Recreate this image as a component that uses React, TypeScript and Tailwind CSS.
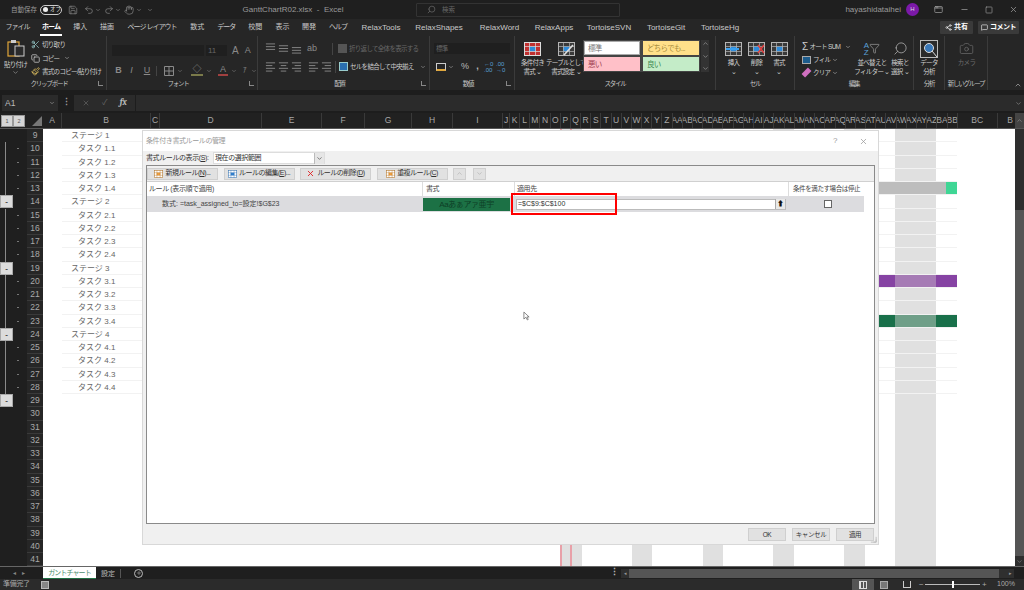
import { ChevronDown, ChevronUp, Copy, Filter, Minus, Paintbrush, Redo2, Save, Scissors, Search, Square, Undo2, X, Share2, MessageSquare, Plus, Camera, Hand, AppWindow } from 'lucide-react';
import type { ReactNode } from 'react';

const FONT = 'font-["Liberation_Sans","Noto_Sans_CJK_JP",sans-serif]';

const KANA = 'text-[7px] tracking-[-1px]';
const KANJI = 'text-[7px]';
const LATIN = 'text-[8px]';
const tabs: [string, string, string][] = [
  ['ファイル', 'w-[35px]', KANA], ['ホーム', 'w-[32px]', KANA], ['挿入', 'w-[26.5px]', KANJI], ['描画', 'w-[27px]', KANJI], ['ページ レイアウト', 'w-[63px]', KANA],
  ['数式', 'w-[27.5px]', KANJI], ['データ', 'w-[30.5px]', KANA], ['校閲', 'w-[27.5px]', KANJI], ['表示', 'w-[27px]', KANJI], ['開発', 'w-[26px]', KANJI], ['ヘルプ', 'w-[32px]', KANA],
  ['RelaxTools', 'w-[54px]', LATIN], ['RelaxShapes', 'w-[62px]', LATIN], ['RelaxWord', 'w-[59px]', LATIN], ['RelaxApps', 'w-[50px]', LATIN],
  ['TortoiseSVN', 'w-[60px]', LATIN], ['TortoiseGit', 'w-[54px]', LATIN], ['TortoiseHg', 'w-[54px]', LATIN],
];

const letters = 'KLMNOPQRSTUVWXYZ'.split('');
const wide = 'ABCDEFGHIJKLMNOPQRSTUVWXYZ'.split('').map(c => 'A' + c).concat(['BA', 'BB']);
const cols: [string, number][] = [
  ['A', 19], ['B', 89], ['C', 9], ['D', 102], ['E', 60], ['F', 43], ['G', 47], ['H', 41], ['I', 50], ['J', 7],
  ...letters.map(l => [l, 10.17] as [string, number]),
  ...wide.map(l => [l, 10.2] as [string, number]),
  ['BC', 40],
];

const labels: Record<number, string> = {
  9: 'ステージ 1', 10: 'タスク 1.1', 11: 'タスク 1.2', 12: 'タスク 1.3', 13: 'タスク 1.4',
  14: 'ステージ 2', 15: 'タスク 2.1', 16: 'タスク 2.2', 17: 'タスク 2.3', 18: 'タスク 2.4',
  19: 'ステージ 3', 20: 'タスク 3.1', 21: 'タスク 3.2', 22: 'タスク 3.3', 23: 'タスク 3.4',
  24: 'ステージ 4', 25: 'タスク 4.1', 26: 'タスク 4.2', 27: 'タスク 4.3', 28: 'タスク 4.4',
};
const rows = Array.from({ length: 33 }, (_, i) => i + 9);
const headRows = [9, 14, 19, 24];

// timeline from x=510 to x=957
type Seg = [number, string];
const W = '#ffffff', G = '#e0e0e0', P = '#e8a0a8';
const baseSegs: Seg[] = [[50, W], [2, P], [8, G], [2, P], [10, G], [50, W], [20, G], [51, W], [20, G], [50, W], [21, G], [50, W], [21, G], [30, W], [41, G], [21, W]];
const leftPart: Seg[] = baseSegs.slice(0, 13);
function segs(r: number): Seg[] {
  if (r === 13) return [...leftPart, [81, '#bdbdbd'], [11, '#3fd695']];
  if (r === 20) return [...leftPart, [30, '#8643a3'], [41, '#a67bb5'], [21, '#8643a3']];
  if (r === 23) return [...leftPart, [30, '#19704a'], [41, '#6f9f88'], [21, '#19704a']];
  return baseSegs;
}

function GridIcon({ fill = '#3a3a3a', hi = '#2e8ad8', line = '#b5b5b5', className = 'w-[17px] h-[14px]', extra }: { fill?: string; hi?: string; line?: string; className?: string; extra?: ReactNode }) {
  return (
    <svg viewBox="0 0 17 14" className={className}>
      <rect x="0.5" y="0.5" width="16" height="13" fill={fill} stroke={line} />
      <rect x="5" y="4.5" width="7" height="5" fill={hi} />
      <path d="M0 4.5H17M0 9.5H17M5.5 0V14M11.5 0V14" stroke={line} strokeWidth="0.7" />
      {extra}
    </svg>
  );
}

function AlignIcon({ kind }: { kind: 'l' | 'c' | 'r' | 't' | 'm' | 'b' }) {
  const d = {
    l: 'M1 2H11M1 5H8M1 8H11M1 11H8', c: 'M1 2H11M3 5H9M1 8H11M3 11H9', r: 'M1 2H11M4 5H11M1 8H11M4 11H11',
    t: 'M1 1H11M1 4H11M1 7H11', m: 'M1 3H11M1 6H11M1 9H11', b: 'M1 5H11M1 8H11M1 11H11',
  }[kind];
  return <svg viewBox="0 0 12 12" className="w-[11px] h-[11px] shrink-0"><path d={d} stroke="#8a8a8a" strokeWidth="1" fill="none" /></svg>;
}

function Group({ w, label, launcher, children }: { w: string; label: string; launcher?: boolean; children: ReactNode }) {
  return (
    <div className={`${w} h-full flex flex-col border-r border-[#3b3b3b] shrink-0`}>
      <div className="flex-1 min-h-0 flex">{children}</div>
      <div className={`h-[12px] flex items-center justify-center relative text-[6.5px] tracking-[-1.2px] text-[#c4c4c4] leading-none whitespace-nowrap ${launcher ? 'pr-[8px]' : ''}`}>
        {label}
        {launcher && <span className="absolute right-[3px] top-[3px] w-[5px] h-[5px] border-l border-b border-[#888]" />}
      </div>
    </div>
  );
}

function Big({ w, icon, lines, dim }: { w: string; icon: ReactNode; lines: string[]; dim?: boolean }) {
  return (
    <div className={`${w} flex flex-col items-center pt-[5px] shrink-0`}>
      <div className="h-[15px] flex items-center justify-center">{icon}</div>
      <div className={`mt-[3px] text-[6.5px] leading-[8.5px] text-center whitespace-nowrap ${dim ? 'text-[#6b6b6b]' : 'text-[#cfcfcf]'}`}>
        {lines.map(l => <div key={l}>{l}</div>)}
      </div>
    </div>
  );
}

function Style({ t, cls }: { t: string; cls: string }) {
  return <div className={`w-[56px] h-[14px] px-[3px] text-[7.5px] leading-[13px] whitespace-nowrap overflow-hidden border ${cls}`}>{t}</div>;
}

function DlgBtn({ icon, t, u, end }: { icon: ReactNode; t: string; u: string; end: string }) {
  return (
    <div className="w-[71px] h-[12px] bg-[#e1e1e1] border border-[#cfcfcf] flex items-center justify-center gap-[2px] text-[7px] tracking-[-0.5px] text-[#333] whitespace-nowrap">
      {icon}<span>{t}(<span className="underline">{u}</span>){end}</span>
    </div>
  );
}

function Titlebar() {
  return (
    <div className="h-[19px] bg-[#1f1f1f] flex items-center text-[#9a9a9a] text-[8px]">
      <div className="w-[170px] shrink-0 flex items-center pl-[11px]">
        <span className="w-[29px] whitespace-nowrap text-[6.5px]">自動保存</span>
        <div className="w-[22px] h-[10px] rounded-full border border-[#ccc] flex items-center text-[5.5px] text-[#ddd] whitespace-nowrap">
          <span className="w-[5px] h-[5px] rounded-full bg-[#eee] ml-[2px] mr-[2px] shrink-0" />オフ
        </div>
        <Save size={10} className="ml-[6px]" strokeWidth={1.4} />
        <Undo2 size={10} className="ml-[6px]" strokeWidth={1.4} />
        <ChevronDown size={6} className="ml-[1px]" />
        <Redo2 size={10} className="ml-[3px]" strokeWidth={1.4} />
        <ChevronDown size={6} className="ml-[1px]" />
        <Hand size={10} className="ml-[3px]" strokeWidth={1.4} />
        <ChevronDown size={6} className="ml-[2px]" />
        <ChevronDown size={6} className="ml-[5px]" />
      </div>
      <span className="w-[246px] shrink-0 text-center text-[8px] whitespace-nowrap">GanttChartR02.xlsx&nbsp; -&nbsp; Excel</span>
      <div className="w-[204px] h-[14px] shrink-0 border border-[#333] rounded-[1px] flex items-center pl-[10px] gap-[6px] text-[#666] text-[6.5px]">
        <Search size={9} className="scale-x-[-1]" />検索
      </div>
      <div className="flex-1 flex items-center justify-end">
        <span className="whitespace-nowrap text-[8px]">hayashidataihei</span>
        <span className="w-[13px] h-[13px] rounded-full bg-[#7b19a8] text-[6px] flex items-center justify-center text-[#ddd] ml-[5px]">H</span>
        <AppWindow size={9} className="ml-[15px]" />
        <Minus size={9} className="ml-[17px]" />
        <Square size={8} className="ml-[16px]" />
        <X size={9} className="ml-[16px] mr-[6px]" />
      </div>
    </div>
  );
}

function TabRow() {
  return (
    <div className="h-[17px] bg-[#262626] flex items-center text-[#c8c8c8] whitespace-nowrap">
      {tabs.map(([t, w, f]) => (
        <div key={t} className={`${w} ${f} shrink-0 text-center relative ${t === 'ホーム' ? 'text-white font-bold' : ''}`}>
          {t}
          {t === 'ホーム' && <span className="absolute left-[5px] right-[5px] -bottom-[3px] h-[1.5px] bg-white" />}
        </div>
      ))}
      <div className="ml-[193px] w-[33px] h-[13px] bg-[#3a3a3a] rounded-[1px] flex items-center justify-center gap-[2px] text-white font-bold text-[7px]">
        <Share2 size={7} />共有
      </div>
      <div className="ml-[5px] w-[41px] h-[13px] bg-[#3a3a3a] rounded-[1px] flex items-center justify-center gap-[2px] text-white font-bold text-[7px] tracking-[-0.5px]">
        <MessageSquare size={7} />コメント
      </div>
    </div>
  );
}

function Ribbon() {
  return (
    <div className="h-[54px] bg-[#262626] flex text-[#b5b5b5] text-[6.5px] tracking-[-0.7px]">
      <Group w="w-[107px]" label="クリップボード" launcher>
        <div className="w-[31px] flex flex-col items-center pt-[3px]">
          <svg viewBox="0 0 18 18" className="w-[18px] h-[18px]">
            <rect x="1" y="3" width="11" height="14" fill="none" stroke="#e0a63a" strokeWidth="1.2" />
            <rect x="4" y="1" width="5" height="3" fill="#ccc" />
            <rect x="8" y="7" width="9" height="10" fill="#2b2b2b" stroke="#ccc" />
          </svg>
          <div className="leading-[9px] mt-[3px] text-[#ccc] whitespace-nowrap">貼り付け</div>
          <ChevronDown size={7} className="text-[#aaa]" />
        </div>
        <div className="flex-1 flex flex-col pt-[2px] text-[#ccc] whitespace-nowrap leading-[13.5px]">
          <div className="flex items-center gap-[2px]"><Scissors size={9} className="text-[#9cc]" />切り取り</div>
          <div className="flex items-center gap-[2px]"><Copy size={9} />コピー<ChevronDown size={6} className="ml-[3px]" /></div>
          <div className="flex items-center gap-[2px]"><Paintbrush size={9} className="text-[#e0c060]" />書式のコピー/貼り付け</div>
        </div>
      </Group>
      <Group w="w-[151px]" label="フォント" launcher>
        <div className="pl-[5px] pt-[7px] flex flex-col gap-[7px]">
          <div className="flex items-center gap-[2px] text-[#666] text-[8px] tracking-normal">
            <div className="w-[92px] h-[11px] bg-[#1f1f1f]" />
            <div className="w-[21px] h-[11px] bg-[#1f1f1f] pl-[2px] leading-[11px]">11</div>
            <span className="ml-[3px] text-[10px] text-[#8a8a8a]">A</span>
            <span className="ml-[4px] text-[9px] text-[#8a8a8a]">A</span>
          </div>
          <div className="flex items-center text-[9px] text-[#8a8a8a] h-[11px] tracking-normal">
            <b className="w-[13px] text-center">B</b><i className="w-[13px] text-center">I</i><span className="w-[18px] text-center underline">U</span>
            <span className="w-[1px] h-[10px] bg-[#444] mr-[7px]" />
            <svg viewBox="0 0 10 10" className="w-[10px] h-[10px]"><path d="M.5.5H9.5V9.5H.5ZM5 0V10M0 5H10" stroke="#8a8a8a" fill="none" /></svg>
            <ChevronDown size={6} className="ml-[3px] mr-[8px]" />
            <span className="w-[12px] text-center border-b-2 border-[#7a7a4a] leading-[9px]">◇</span>
            <ChevronDown size={6} className="ml-[3px] mr-[6px]" />
            <span className="w-[10px] text-center border-b-2 border-[#a04040] leading-[9px]">A</span>
            <ChevronDown size={6} className="ml-[3px] mr-[6px]" />
            <span className="text-[7px]">ｱ</span>
            <ChevronDown size={6} className="ml-[4px]" />
          </div>
        </div>
      </Group>
      <Group w="w-[172px]" label="配置" launcher>
        <div className="pl-[7px] pt-[7px] flex flex-col gap-[7px]">
          <div className="flex items-center gap-[2px] h-[11px]">
            <AlignIcon kind="t" /><AlignIcon kind="m" /><AlignIcon kind="b" />
            <span className="w-[25px] pl-[3px] text-[9px] tracking-normal text-[#8a8a8a]">ab</span>
            <span className="w-[1px] h-[12px] bg-[#444] ml-[1px] shrink-0" />
            <span className="ml-[3px] w-[9px] h-[9px] bg-[#555] shrink-0" />
            <span className="text-[#666] whitespace-nowrap">折り返して全体を表示する</span>
          </div>
          <div className="flex items-center gap-[2px] h-[11px]">
            <AlignIcon kind="l" /><AlignIcon kind="c" /><AlignIcon kind="r" />
            <span className="w-[2px]" />
            <AlignIcon kind="l" /><AlignIcon kind="r" />
            <span className="w-[1px] h-[12px] bg-[#444] ml-[1px] shrink-0" />
            <span className="w-[9px] h-[9px] bg-[#2a6fb0] border border-[#9cc] shrink-0 ml-[1px]" />
            <span className="text-[#ccc] whitespace-nowrap">セルを結合して中央揃え</span>
            <ChevronDown size={6} className="ml-[4px]" />
          </div>
        </div>
      </Group>
      <Group w="w-[85px]" label="数値" launcher>
        <div className="pl-[4px] pt-[7px] flex flex-col gap-[7px]">
          <div className="w-[76px] h-[11px] bg-[#1f1f1f] text-[#666] pl-[2px] leading-[11px]">標準</div>
          <div className="flex items-center h-[11px] text-[#bbb] text-[9px] tracking-normal">
            <span className="w-[10px] h-[8px] ml-[2px] border border-[#ccc] border-b-[#e0a63a] border-b-2" />
            <ChevronDown size={6} className="ml-[2px] mr-[5px]" />
            <span className="w-[12px] text-center">%</span>
            <b className="w-[13px] text-center">,</b>
            <span className="text-[6px] leading-[6px] text-[#5aa0d8] w-[12px] whitespace-nowrap">←0<br />.00</span>
            <span className="text-[6px] leading-[6px] text-[#5aa0d8] whitespace-nowrap">.00<br />→0</span>
          </div>
        </div>
      </Group>
      <Group w="w-[201px]" label="スタイル">
        <Big w="w-[35px]" icon={<GridIcon fill="#c03030" hi="#2e8ad8" line="#ddd" />} lines={['条件付き', '書式 ⌄']} />
        <Big w="w-[32px]" icon={<GridIcon fill="#3a3a3a" hi="#2e8ad8" extra={<path d="M6 13L15 3" stroke="#ddd" strokeWidth="1.6" />} />} lines={['テーブルとして', '書式設定 ⌄']} />
        <div className="ml-[1px] mt-[4px] bg-[#444] p-[1px] grid grid-cols-[56px_56px] gap-x-[3px] gap-y-[2px] h-[32px] self-start shrink-0">
          <Style t="標準" cls="bg-white border-[#aaa] text-[#777]" />
          <Style t="どちらでも..." cls="bg-[#ffe08a] border-[#ffe08a] text-[#a58a3a]" />
          <Style t="悪い" cls="bg-[#ffc0c8] border-[#ffc0c8] text-[#a04050]" />
          <Style t="良い" cls="bg-[#c4ecc8] border-[#c4ecc8] text-[#3c8a50]" />
        </div>
        <div className="mt-[4px] ml-[1px] w-[8px] h-[32px] flex flex-col items-center justify-between bg-[#333] text-[#aaa] shrink-0">
          <ChevronUp size={7} /><ChevronDown size={7} /><ChevronDown size={7} />
        </div>
      </Group>
      <Group w="w-[79px]" label="セル">
        <div className="flex pl-[6px]">
          <Big w="w-[23px]" icon={<GridIcon extra={<path d="M1 7H14" stroke="#3aa0f0" strokeWidth="2" />} />} lines={['挿入', '⌄']} />
          <Big w="w-[23px]" icon={<GridIcon extra={<path d="M10 3L16 11M16 3L10 11" stroke="#e04040" strokeWidth="1.4" />} />} lines={['削除', '⌄']} />
          <Big w="w-[22px]" icon={<GridIcon />} lines={['書式', '⌄']} />
        </div>
      </Group>
      <Group w="w-[119px]" label="編集">
        <div className="w-[62px] pl-[7px] pt-[4px] text-[#ccc] leading-[13px] whitespace-nowrap shrink-0">
          <div className="flex items-center gap-[2px]"><span className="text-[10px]">Σ</span>オート SUM<ChevronDown size={6} className="ml-[3px]" /></div>
          <div className="flex items-center gap-[2px]"><span className="w-[9px] h-[8px] border border-[#aaa] bg-[#1d5c8c]" />フィル<ChevronDown size={6} /></div>
          <div className="flex items-center gap-[2px]"><span className="w-[9px] h-[5px] bg-[#d070c0] -rotate-45" />クリア<ChevronDown size={6} /></div>
        </div>
        <Big w="w-[30px]" icon={<span className="flex items-center text-[8px] leading-[7px] text-[#5aa0d8] tracking-normal">A<br />Z<Filter size={11} strokeWidth={1.1} className="text-[#ccc]" /></span>} lines={['並べ替えと', 'フィルター ⌄']} />
        <Big w="w-[26px]" icon={<Search size={15} strokeWidth={1.2} className="scale-x-[-1]" />} lines={['検索と', '選択 ⌄']} />
      </Group>
      <Group w="w-[31px]" label="分析">
        <Big w="w-[30px]" icon={<svg viewBox="0 0 18 18" className="w-[18px] h-[18px]"><rect x=".5" y=".5" width="17" height="17" fill="#2b2b2b" stroke="#bbb" /><circle cx="9" cy="8" r="4.5" fill="#3a78b8" stroke="#ddd" /><path d="M12 11L17 17" stroke="#ddd" /></svg>} lines={['データ', '分析']} />
      </Group>
      <Group w="w-[43px]" label="新しいグループ">
        <Big w="w-[43px]" dim icon={<Camera size={15} strokeWidth={1} className="text-[#777]" />} lines={['カメラ']} />
      </Group>
      <div className="flex-1 flex items-end justify-end pr-[2px] pb-[1px]"><ChevronUp size={8} /></div>
    </div>
  );
}

function FormulaBar() {
  return (
    <div className="h-[23px] bg-[#1d1d1d] pt-[5px] flex text-[#999]">
      <div className="ml-[2px] w-[56px] h-[16px] bg-[#2b2b2b] flex items-center justify-between px-[3px] text-[8.5px] text-[#bbb]">A1<ChevronDown size={6} /></div>
      <div className="w-[16px] text-center text-[9px] font-bold leading-[15px]">⋮</div>
      <div className="w-[61px] h-[16px] bg-[#2b2b2b] flex items-center justify-around px-[2px]">
        <X size={8} className="text-[#666]" /><span className="text-[8px] text-[#666]">✓</span><i className="text-[9px] font-serif font-bold text-[#bbb]">fx</i>
      </div>
      <div className="flex-1 h-[16px] ml-[1px] bg-[#2b2b2b] flex items-center justify-end pr-[2px]"><ChevronDown size={7} /></div>
    </div>
  );
}

function ColumnHeader() {
  return (
    <div className="h-[16px] bg-[#212121] flex text-[8.5px] text-[#a8a8a8] border-b border-[#555]">
      <div className="w-[43px] flex shrink-0 items-center pl-[1px]">
        <span className="w-[12px] h-[12px] bg-[#d6d6d6] border border-[#999] text-[5.5px] text-[#555] text-center leading-[11px]">1</span>
        <span className="w-[12px] h-[12px] bg-[#d6d6d6] border border-[#999] text-[5.5px] text-[#555] text-center leading-[11px]">2</span>
        <svg viewBox="0 0 10 10" className="w-[10px] h-[10px] ml-[7px]"><path d="M10 0V10H0Z" fill="#777" /></svg>
      </div>
      {cols.map(([c, w]) => (
        <div key={c} style={{ width: w }} className="shrink-0 border-r border-[#3a3a3a] flex justify-center items-center overflow-hidden whitespace-nowrap">{c}</div>
      ))}
      <div className="flex-1 flex justify-end items-center overflow-hidden pr-[2px]">B</div>
      <div className="w-[9px] bg-[#444] flex items-center justify-center text-[#999]"><ChevronUp size={7} /></div>
    </div>
  );
}

function Sheet() {
  return (
    <div className="h-[437px] flex relative bg-white overflow-hidden">
      <div className="w-[43px] shrink-0 bg-[#1f1f1f] flex flex-col">
        {rows.map(r => {
          const child = r > 9 && r < 29 && !headRows.includes(r);
          const btn = r > 9 && r <= 29 && (headRows.includes(r) || r === 29);
          return (
            <div key={r} className="h-[13.25px] flex shrink-0">
              <div className="w-[27px] relative flex items-center">
                {child && <span className="ml-[5px] w-[1px] self-stretch bg-[#8a8a8a]" />}
                {child && <span className="ml-[11px] w-[2px] h-[1px] bg-[#777]" />}
                {btn && <span className="w-[13px] h-[13px] bg-[#dcdcdc] border border-[#aaa] text-[#444] text-[8px] leading-[11px] text-center font-bold">-</span>}
              </div>
              <div className="w-[16px] bg-[#262626] border-b border-[#3a3a3a] text-[8.5px] text-[#aaa] text-center leading-[13px]">{r}</div>
            </div>
          );
        })}
      </div>
      <div className="w-[972px] shrink-0 flex flex-col">
        {rows.map(r => (
          <div key={r} className="h-[13.25px] shrink-0 flex">
            <div className="w-[19px] shrink-0" />
            <div className={`w-[89px] shrink-0 text-[8px] text-[#666] whitespace-nowrap leading-[13px] ${r < 29 ? 'border-b border-[#f2f2f2]' : ''} ${headRows.includes(r) ? 'pl-[9px]' : 'pl-[16px]'}`}>{labels[r]}</div>
            <div className="w-[359px] shrink-0" />
            {segs(r).map(([w, c], i) => (
              <div key={i} style={{ width: w, backgroundColor: c }} className={`shrink-0 ${r < 29 ? 'border-b border-[#f2f2f2]' : ''}`} />
            ))}
          </div>
        ))}
      </div>
      <div className="w-[9px] shrink-0 bg-[#2e2e2e] flex flex-col">
        <div className="h-[81px]" />
        <div className="flex-1 bg-[#555]" />
        <div className="h-[10px] flex items-center justify-center text-[#888]"><ChevronDown size={7} /></div>
      </div>
      <Dialog />
    </div>
  );
}

function Dialog() {
  return (
    <div className="absolute left-[142px] top-[1px] w-[737px] h-[415px] bg-[#f0f0f0] border border-[#d8d8d8] flex flex-col text-[7px] tracking-[-0.4px] text-[#333]">
      <div className="h-[20px] bg-white flex items-center pl-[3px] text-[#999] shrink-0">
        <span className="flex-1">条件付き書式ルールの管理</span>
        <span className="w-[26px] text-[8px]">?</span>
        <X size={9} className="mr-[10px]" />
      </div>
      <div className="h-[14px] flex items-center pl-[3px] shrink-0">
        <span className="w-[67px] whitespace-nowrap">書式ルールの表示(<span className="underline">S</span>):</span>
        <div className="w-[112px] h-[12px] bg-white border border-[#ddd] flex items-center justify-between pl-[1px]">
          現在の選択範囲
          <span className="w-[10px] h-[11px] bg-[#e6e6e6] border-l border-[#bbb] flex items-center justify-center"><ChevronDown size={7} /></span>
        </div>
      </div>
      <div className="h-[359px] ml-[3px] w-[729px] border border-[#8a8a8a] flex flex-col shrink-0">
        <div className="h-[15px] flex items-center gap-[5.5px] bg-[#f0f0f0] shrink-0">
          <DlgBtn icon={<GridIcon fill="#fff" hi="#f0a040" line="#b07020" className="w-[9px] h-[8px]" />} t="新規ルール" u="N" end="..." />
          <DlgBtn icon={<GridIcon fill="#fff" hi="#3080d0" line="#3070b0" className="w-[9px] h-[8px]" />} t="ルールの編集" u="E" end="..." />
          <DlgBtn icon={<X size={9} strokeWidth={2.4} className="text-[#e02020]" />} t="ルールの削除" u="D" end="" />
          <DlgBtn icon={<GridIcon fill="#fff" hi="#f0a040" line="#b07020" className="w-[9px] h-[8px]" />} t="重複ルール" u="C" end="" />
          <div className="w-[13px] h-[12px] bg-[#e1e1e1] border border-[#cfcfcf] flex items-center justify-center text-[#aaa]"><ChevronUp size={7} /></div>
          <div className="w-[13px] h-[12px] ml-[1px] bg-[#e1e1e1] border border-[#cfcfcf] flex items-center justify-center text-[#aaa]"><ChevronDown size={7} /></div>
        </div>
        <div className="flex-1 bg-white flex flex-col border-t border-[#d0d0d0]">
          <div className="h-[14px] w-[717px] flex items-center text-[#444] shrink-0">
            <span className="w-[276px] shrink-0 pl-[2px] border-r border-[#ddd] h-full leading-[14px]">ルール (表示順で適用)</span>
            <span className="w-[92px] shrink-0 pl-[3px] border-r border-[#ddd] h-full leading-[14px]">書式</span>
            <span className="w-[274px] shrink-0 pl-[2px] border-r border-[#ddd] h-full leading-[14px]">適用先</span>
            <span className="flex-1 pl-[4px] text-[6.5px] whitespace-nowrap">条件を満たす場合は停止</span>
          </div>
          <div className="h-[16px] w-[717px] bg-[#dcdcdf] flex items-center shrink-0">
            <span className="w-[276px] shrink-0 pl-[15px] whitespace-nowrap text-[#444] tracking-normal">数式: =task_assigned_to=設定!$G$23</span>
            <div className="w-[87px] h-[13px] shrink-0 bg-[#1c7145] text-[#0d3f25] text-[8px] text-center leading-[13px] whitespace-nowrap">Aaあぁアァ亜宇</div>
            <div className="w-[270px] h-[11px] shrink-0 ml-[6px] bg-white border border-[#bbb] flex items-center justify-between pl-[1px] tracking-normal">
              =$C$9:$C$100
              <span className="w-[10px] h-[10px] bg-[#e8e8e8] border-l border-[#aaa] text-[7px] text-[#111] text-center leading-[9px] font-bold">⬆</span>
            </div>
            <span className="ml-[38px] w-[8px] h-[8px] bg-white border border-[#666]" />
          </div>
        </div>
      </div>
      <div className="flex-1 flex items-center justify-end gap-[6px] pr-[4px]">
        {['OK', 'キャンセル', '適用'].map(t => (
          <div key={t} className="w-[38px] h-[13px] bg-[#e1e1e1] border border-[#cfcfcf] text-center leading-[12px] text-[6.5px] text-[#333] whitespace-nowrap">{t}</div>
        ))}
      </div>
      <div className="absolute left-[368px] top-[62px] w-[106px] h-[22px] border-[2.5px] border-[#f00]" />
      <svg viewBox="0 0 8 11" className="absolute left-[380px] top-[180px] w-[7px] h-[10px]"><path d="M1 1V9L3 7L5 10L6 9.4L4.4 6.6H7Z" fill="#fff" stroke="#444" strokeWidth="0.7" /></svg>
      <svg viewBox="0 0 8 8" className="absolute right-[1px] bottom-[1px] w-[7px] h-[7px]"><path d="M7 1V7H1M7 4V7H4" stroke="#bbb" fill="none" /></svg>
    </div>
  );
}

function SheetTabs() {
  return (
    <div className="h-[13px] bg-[#1f1f1f] border-t border-[#666] flex items-center text-[7px] text-[#bbb]">
      <div className="w-[43px] text-[#888] text-center text-[6px] tracking-[6px]">◂▸</div>
      <div className="w-[53px] h-full bg-white border-b-[1.5px] border-[#217346] text-[#4d9070] text-center leading-[11px] whitespace-nowrap tracking-[-0.9px]">ガントチャート</div>
      <div className="w-[25px] text-center border-r border-[#555] h-[9px] leading-[9px]">設定</div>
      <div className="ml-[13px] w-[9px] h-[9px] rounded-full border border-[#bbb] flex items-center justify-center"><Plus size={6} /></div>
      <div className="ml-[467px] w-[8px] text-center font-bold text-[9px]">⋮</div>
      <div className="ml-[3px] w-[393px] h-[9px] bg-[#2f2f2f] flex">
        <span className="w-[8px] text-[5px] text-center leading-[9px] text-[#999]">◂</span>
        <span className="flex-1 bg-[#555]" />
        <span className="w-[15px] text-[5px] text-right pr-[2px] leading-[9px] text-[#999]">▸</span>
      </div>
    </div>
  );
}

function StatusBar() {
  return (
    <div className="h-[11px] bg-[#2b2b2b] flex items-center text-[7px] text-[#aaa]">
      <span className="pl-[3px] w-[41px] whitespace-nowrap tracking-[-0.3px]">準備完了</span>
      <span className="w-[8px] h-[8px] bg-[#888] border border-[#bbb]" />
      <div className="ml-[803px] w-[22px] h-full bg-[#555] flex items-center justify-center">
        <span className="w-[8px] h-[8px] border border-[#ddd] bg-[repeating-linear-gradient(90deg,#ddd_0_1px,transparent_1px_3px)]" />
      </div>
      <span className="ml-[6px] w-[8px] h-[8px] border border-[#aaa] bg-[#777]" />
      <span className="ml-[15px] w-[8px] h-[7px] border border-[#ccc] border-t-0" />
      <span className="ml-[8px] w-[6px] text-[8px]">−</span>
      <div className="w-[55px] h-[1px] bg-[#bbb] flex justify-center items-center"><span className="w-[2px] h-[7px] bg-white" /></div>
      <span className="ml-[2px] w-[6px] text-[8px]">+</span>
      <span className="ml-[9px] whitespace-nowrap">100%</span>
    </div>
  );
}

export default function App() {
  return (
    <div className={`w-[1024px] h-[590px] overflow-hidden bg-[#1f1f1f] flex flex-col ${FONT}`}>
      <Titlebar />
      <TabRow />
      <Ribbon />
      <FormulaBar />
      <ColumnHeader />
      <Sheet />
      <SheetTabs />
      <StatusBar />
    </div>
  );
}
